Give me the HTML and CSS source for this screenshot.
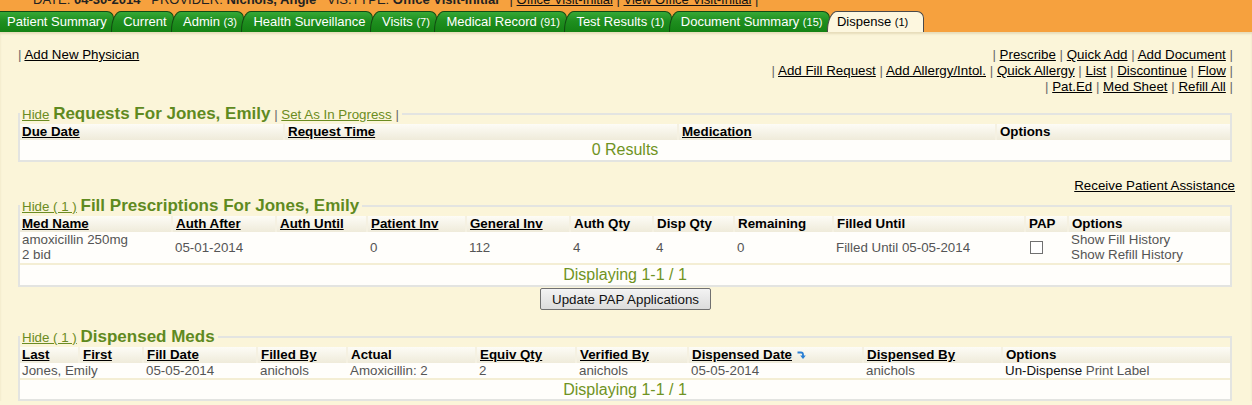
FILE: index.html
```html
<!DOCTYPE html>
<html>
<head>
<meta charset="utf-8">
<title>Dispense</title>
<link rel="stylesheet" href="styles.css">
</head>
<body>
<div class="header">
  <div class="info">
    <div class="info-line">DATE: <b>04-30-2014</b> &nbsp; PROVIDER: <b>Nichols, Angie</b> &nbsp; VIS.TYPE: <b>Office Visit-Initial</b> &nbsp; | <a href="#">Office Visit-Initial</a> | <a href="#">View Office Visit-Initial</a> |</div>
  </div>
  <div class="tabs">
    <a class="tab first" href="#">Patient Summary</a>
    <a class="tab" href="#">Current</a>
    <a class="tab" href="#">Admin <small>(3)</small></a>
    <a class="tab" href="#">Health Surveillance</a>
    <a class="tab" href="#">Visits <small>(7)</small></a>
    <a class="tab" href="#">Medical Record <small>(91)</small></a>
    <a class="tab" href="#">Test Results <small>(1)</small></a>
    <a class="tab" href="#">Document Summary <small>(15)</small></a>
    <a class="tab active" href="#">Dispense <small>(1)</small></a>
  </div>
</div>
<div class="content">
  <div class="toplinks">
    <div class="leftlinks"><span class="sep">|</span> <a href="#">Add New Physician</a></div>
    <div class="rightlinks">
      <div><span class="sep">|</span> <a href="#">Prescribe</a> <span class="sep">|</span> <a href="#">Quick Add</a> <span class="sep">|</span> <a href="#">Add Document</a> <span class="sep">|</span></div>
      <div><span class="sep">|</span> <a href="#">Add Fill Request</a> <span class="sep">|</span> <a href="#">Add Allergy/Intol.</a> <span class="sep">|</span> <a href="#">Quick Allergy</a> <span class="sep">|</span> <a href="#">List</a> <span class="sep">|</span> <a href="#">Discontinue</a> <span class="sep">|</span> <a href="#">Flow</a> <span class="sep">|</span></div>
      <div><span class="sep">|</span> <a href="#">Pat.Ed</a> <span class="sep">|</span> <a href="#">Med Sheet</a> <span class="sep">|</span> <a href="#">Refill All</a> <span class="sep">|</span></div>
    </div>
  </div>

  <fieldset class="box box-requests">
    <legend><a class="hide" href="#">Hide</a> <span class="title">Requests For Jones, Emily</span> <span class="sep">|</span> <a class="hide" href="#">Set As In Progress</a> <span class="sep">|</span></legend>
    <table class="grid">
      <colgroup><col style="width:264px"><col style="width:394px"><col style="width:318px"><col style="width:234px"></colgroup>
      <thead><tr><th><a href="#">Due Date</a></th><th><a href="#">Request Time</a></th><th><a href="#">Medication</a></th><th>Options</th></tr></thead>
      <tbody><tr class="summary"><td colspan="4">0 Results</td></tr></tbody>
    </table>
  </fieldset>

  <div class="assist"><a href="#">Receive Patient Assistance</a></div>

  <fieldset class="box box-fill">
    <legend><a class="hide" href="#">Hide ( 1 )</a> <span class="title">Fill Prescriptions For Jones, Emily</span></legend>
    <table class="grid">
      <colgroup><col style="width:152px"><col style="width:104px"><col style="width:91px"><col style="width:99px"><col style="width:104px"><col style="width:83px"><col style="width:81px"><col style="width:99px"><col style="width:192px"><col style="width:43px"><col style="width:162px"></colgroup>
      <thead><tr><th><a href="#">Med Name</a></th><th><a href="#">Auth After</a></th><th><a href="#">Auth Until</a></th><th><a href="#">Patient Inv</a></th><th><a href="#">General Inv</a></th><th>Auth Qty</th><th>Disp Qty</th><th>Remaining</th><th>Filled Until</th><th>PAP</th><th>Options</th></tr></thead>
      <tbody>
        <tr class="data tall"><td>amoxicillin 250mg<br>2 bid</td><td>05-01-2014</td><td></td><td>0</td><td>112</td><td>4</td><td>4</td><td>0</td><td>Filled Until 05-05-2014</td><td><span class="check"></span></td><td>Show Fill History<br>Show Refill History</td></tr>
        <tr class="summary"><td colspan="11">Displaying 1-1 / 1</td></tr>
      </tbody>
    </table>
  </fieldset>

  <div class="btnrow"><button class="btn" type="button">Update PAP Applications</button></div>

  <fieldset class="box box-disp">
    <legend><a class="hide" href="#">Hide ( 1 )</a> <span class="title">Dispensed Meds</span></legend>
    <table class="grid">
      <colgroup><col style="width:59px"><col style="width:64px"><col style="width:114px"><col style="width:90px"><col style="width:129px"><col style="width:100px"><col style="width:112px"><col style="width:175px"><col style="width:139px"><col style="width:228px"></colgroup>
      <thead><tr><th><a href="#">Last</a></th><th><a href="#">First</a></th><th><a href="#">Fill Date</a></th><th><a href="#">Filled By</a></th><th>Actual</th><th><a href="#">Equiv Qty</a></th><th><a href="#">Verified By</a></th><th><a href="#">Dispensed Date</a><svg class="sort" width="10" height="10" viewBox="0 0 10 10"><path d="M1.5 2.5 H5 Q7 2.5 7 4.5 V6" fill="none" stroke="#2a7fd4" stroke-width="1.8"/><path d="M4.2 5.5 H9.8 L7 9 Z" fill="#2a7fd4"/></svg></th><th><a href="#">Dispensed By</a></th><th>Options</th></tr></thead>
      <tbody>
        <tr class="data"><td class="nowrap">Jones, Emily</td><td></td><td>05-05-2014</td><td>anichols</td><td>Amoxicillin: 2</td><td>2</td><td>anichols</td><td>05-05-2014</td><td>anichols</td><td><span class="strong">Un-Dispense</span> Print Label</td></tr>
        <tr class="summary short"><td colspan="10">Displaying 1-1 / 1</td></tr>
      </tbody>
    </table>
  </fieldset>
</div>
</body>
</html>
```

FILE: styles.css
```css
html, body {
  margin: 0;
  padding: 0;
}
body {
  background: #fbf5d9;
  font-family: "Liberation Sans", Arial, sans-serif;
  font-size: 13.33px;
  color: #000;
  overflow: hidden;
}
a {
  color: #000;
  text-decoration: underline;
}

/* header */
.header {
  background: #f6a13e;
  height: 32px;
  display: flex;
  flex-direction: column;
}
.info {
  height: 11px;
  overflow: hidden;
}
.info-line {
  margin-top: -8px;
  line-height: 16px;
  font-size: 13px;
  padding-left: 33px;
  color: #222;
  white-space: nowrap;
}
.info-line a { color: #111; }
.tabs {
  height: 21px;
  display: flex;
  align-items: flex-end;
}
.tab {
  height: 21px;
  box-sizing: border-box;
  line-height: 19px;
  font-size: 13px;
  padding: 0 6.5px 0 11px;
  margin-left: -3px;
  color: #fff;
  text-decoration: none;
  white-space: nowrap;
  background: linear-gradient(#36a836, #1f8f1f 45%, #148214);
  border: 1px solid #124a12;
  border-bottom: 0;
  border-radius: 10px 7px 0 0 / 20px 7px 0 0;
}
.tab small {
  font-size: 11px;
}
.tab.first {
  margin-left: 0;
  padding-left: 7px;
  border-left: 0;
  border-top-left-radius: 0;
}
.tab.active {
  background: #fdf7df;
  color: #000;
  border-color: #4a4a4a;
  padding: 0 15px 0 9px;
}

/* content */
.content {
  padding: 15px 20px 0 18px;
  box-shadow: inset 0 2px 2px rgba(120, 90, 20, 0.15);
}
.sep {
  color: #6a6a6a;
}
.toplinks {
  display: flex;
  justify-content: space-between;
  line-height: 16px;
}
.rightlinks {
  text-align: right;
  margin-right: -1px;
}

/* boxes */
.box {
  margin: 9px 0 0;
  padding: 0;
  min-width: 0;
  border: 2px solid #e3e4e1;
}
.box legend {
  padding: 0 3px 0 2px;
  margin-left: 0;
  line-height: 20px;
  height: 20px;
  white-space: nowrap;
}
.hide {
  color: #6b8c22;
}
.title {
  font-size: 17px;
  font-weight: bold;
  color: #5f8a1f;
}
.assist {
  text-align: right;
  line-height: 16px;
  margin: 16px -3px 0 0;
}
.box-fill {
  margin-top: 2px;
}
.box-disp {
  margin-top: 16px;
}

/* grid tables */
.grid {
  width: 100%;
  border-collapse: collapse;
  table-layout: fixed;
}
.grid th {
  height: 16px;
  padding: 0 3px;
  text-align: left;
  font-weight: bold;
  white-space: nowrap;
  line-height: 16px;
  background: linear-gradient(#fdfcf6, #efebda);
  border-left: 2px solid #f5f1e2;
}
.grid th:first-child {
  border-left: 0;
  padding-left: 2px;
}
.grid td {
  padding: 0 3px;
  background: #fffefb;
  color: #555;
  line-height: 15px;
  vertical-align: middle;
}
.grid td:first-child {
  padding-left: 2px;
}
.grid td.nowrap {
  white-space: nowrap;
  overflow: visible;
}
.grid tr.data td {
  height: 15px;
  border-bottom: 2px solid #f4eed4;
}
.grid tr.tall td {
  height: 31px;
  padding-top: 0;
  padding-bottom: 1px;
  box-sizing: border-box;
}
.grid tr.summary td {
  height: 20px;
  text-align: center;
  font-size: 16px;
  color: #6f9323;
  line-height: 20px;
  padding: 0;
}
.grid tr.short td {
  height: 19px;
  line-height: 19px;
}
.check {
  display: inline-block;
  width: 11px;
  height: 11px;
  border: 1px solid #707070;
  background: #fff;
  vertical-align: middle;
  margin-left: 2px;
}
.strong {
  color: #111;
}
.sort {
  vertical-align: -1px;
  margin-left: 4px;
}

/* button */
.btnrow {
  display: flex;
  justify-content: center;
  padding-top: 1px;
}
.btn {
  height: 22px;
  padding: 0 11px;
  font-family: "Liberation Sans", Arial, sans-serif;
  font-size: 13.33px;
  color: #111;
  border: 1px solid #707070;
  border-radius: 2px;
  background: linear-gradient(#f3f3f3, #dcdcdc);
  margin-left: 1px;
}
.btnrow + .box-disp {
  margin-top: 17px;
}
```
